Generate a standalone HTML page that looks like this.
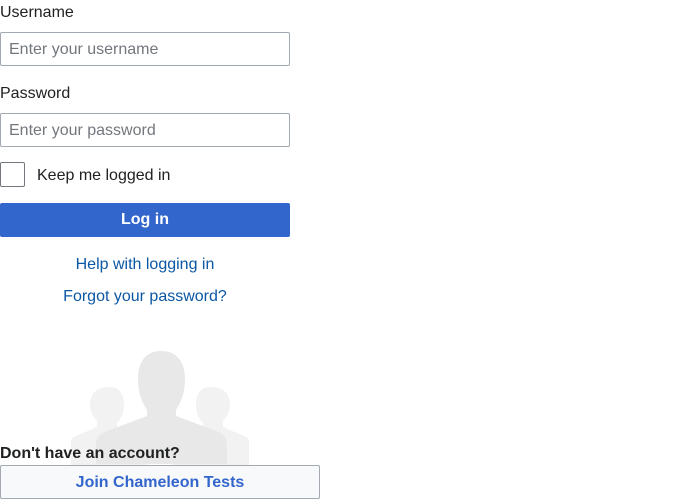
<!DOCTYPE html>
<html><head><style>
body{margin:0;width:690px;height:499px;background:#fff;font-family:"Liberation Sans",sans-serif;color:#202122;position:relative;overflow:hidden}
.a{position:absolute}
.lbl{font-size:16px;left:0}
.inp{left:0;border:1px solid #a2a9b1;border-radius:2px;box-sizing:border-box;width:290px;font-size:16px;color:#72777d;padding-left:8px}
.lnk{font-size:16px;width:290px;text-align:center;color:#0b57a4}
</style></head><body>
<svg class="a" style="left:60px;top:345px" width="200" height="125" viewBox="60 345 200 125">
<g fill="#f2f2f2">
<path d="M110 387c10 0 14 8 14 18c0 9-4 15-7 18v7l30 8v27H71v-25c2-4 8-5 26-13v-6c-3-3-7-9-7-16c0-10 5-18 20-18z"/>
<path d="M210 387c-10 0-14 8-14 18c0 9 4 15 7 18v7l-30 8v27h76v-25c-2-4-8-5-26-13v-6c3-3 7-9 7-16c0-10-5-18-20-18z"/>
</g>
<path fill="#e8e8e8" d="M161 351c17 0 24 12 24 28c0 15-5 25-9 31v6l40 15c8 3 11 7 11 15v18H96v-18c0-8 3-12 11-15l40-15v-6c-4-6-9-16-9-31c0-16 7-28 23-28z"/>
</svg>
<div class="a lbl" style="top:4px">Username</div>
<div class="a inp" style="top:32px;height:34px;line-height:33px">Enter your username</div>
<div class="a lbl" style="top:85px">Password</div>
<div class="a inp" style="top:113px;height:34px;line-height:33px">Enter your password</div>
<div class="a" style="left:0;top:162px;width:25px;height:25px;border:1px solid #72777d;border-radius:2px;box-sizing:border-box"></div>
<div class="a" style="left:37px;top:167px;font-size:16px">Keep me logged in</div>
<div class="a" style="left:0;top:203px;width:290px;height:34px;background:#3366cc;border-radius:2px;color:#fff;font-weight:bold;font-size:16px;text-align:center;line-height:34px">Log in</div>
<div class="a lnk" style="left:0;top:256px">Help with logging in</div>
<div class="a lnk" style="left:0;top:288px">Forgot your password?</div>
<div class="a" style="left:0;top:445px;font-size:16px;font-weight:bold">Don't have an account?</div>
<div class="a" style="left:0;top:465px;width:320px;height:34px;box-sizing:border-box;border:1px solid #a2a9b1;border-radius:2px;background:#f8f9fa;color:#3366cc;font-weight:bold;font-size:16px;text-align:center;line-height:33px">Join Chameleon Tests</div>
</body></html>
